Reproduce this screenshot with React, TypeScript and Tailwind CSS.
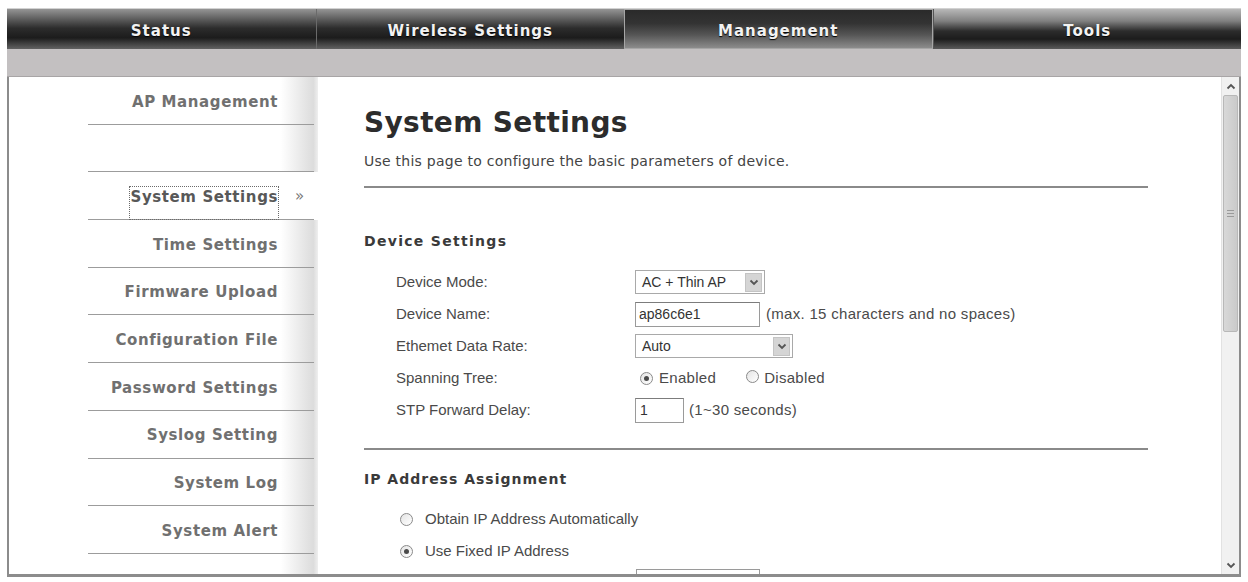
import React from "react";

const tabs = [
  { label: "Status", kind: "a" },
  { label: "Wireless Settings", kind: "a" },
  { label: "Management", kind: "m" },
  { label: "Tools", kind: "t" },
];

function Chevron({ up = false }: { up?: boolean }) {
  return (
    <svg width="10" height="7" viewBox="0 0 10 7">
      <path
        d={up ? "M1.5 5.5 L5 2 L8.5 5.5" : "M1.5 1.5 L5 5 L8.5 1.5"}
        stroke="#555"
        strokeWidth="1.8"
        fill="none"
      />
    </svg>
  );
}

function Radio({ checked = false }: { checked?: boolean }) {
  return (
    <span className="inline-flex w-[13px] h-[13px] rounded-full border border-[#8a8a8a] bg-[linear-gradient(135deg,#e4e4e4,#ffffff)] items-center justify-center shrink-0">
      {checked && <span className="w-[5px] h-[5px] rounded-full bg-[#4a4a4a]" />}
    </span>
  );
}

function Select({ width, value }: { width: string; value: string }) {
  return (
    <div
      className={`${width} h-[24px] border border-[#a9a9a9] bg-white flex items-center justify-between pl-[6px] pr-[2px] text-[14px] text-[#333]`}
    >
      <span>{value}</span>
      <span className="w-[17px] h-[19px] bg-[#d5d5d5] border border-[#c4c4c4] flex items-center justify-center">
        <Chevron />
      </span>
    </div>
  );
}

function Nav() {
  return (
    <div className="h-[41px] grid grid-cols-4 border-t border-[#d2d2d2] bg-[#1e1e1e]">
      {tabs.map((t) => (
        <div
          key={t.label}
          className={
            t.kind === "m"
              ? "flex items-center justify-center border border-[#a6a6a6] bg-[linear-gradient(180deg,#2a2a2a_0%,#333333_35%,#555555_65%,#8c8c8c_100%)]"
              : t.kind === "t"
              ? "flex items-center justify-center border-l border-[#555] bg-[linear-gradient(180deg,#b8b8b8_0%,#808080_30%,#2c2c2c_55%,#1c1c1c_75%,#5a5a5a_100%)]"
              : "flex items-center justify-center border-l border-[#6a6a6a] first:border-l-0 bg-[linear-gradient(180deg,#959595_0%,#5e5e5e_25%,#2c2c2c_48%,#1c1c1c_72%,#626262_100%)]"
          }
        >
          <span className="font-['DejaVu_Sans',sans-serif] font-bold text-[15px] tracking-[1px] text-[#f2f2f2] [text-shadow:0_1px_1px_#000] pt-[5px]">
            {t.label}
          </span>
        </div>
      ))}
    </div>
  );
}

const items = [
  "AP Management",
  "",
  "System Settings",
  "Time Settings",
  "Firmware Upload",
  "Configuration File",
  "Password Settings",
  "Syslog Setting",
  "System Log",
  "System Alert",
];

function Sidebar() {
  return (
    <div className="w-[309px] shrink-0 flex flex-col bg-[linear-gradient(90deg,#ffffff_0%,#ffffff_88%,#dcdcdc_98.5%,#efefef_100%)] font-['DejaVu_Sans',sans-serif] font-bold text-[15px] tracking-[0.6px]">
      {items.map((it) => {
        const active = it === "System Settings";
        return (
          <div key={it || "blank"} className={active ? "bg-white" : ""}>
            {active ? (
              <div className="h-[46.7px] flex justify-end items-start pt-[14px] pr-[40px]">
                <span className="relative h-[34px] border border-dotted border-[#6a6a6a] pt-[1px] leading-[18px] text-[#585858] -mr-[1px]">
                  {it}
                  <span className="absolute left-[calc(100%+17px)] top-[0px] text-[15px] tracking-[0px] text-[#777] font-normal">
                    »
                  </span>
                </span>
              </div>
            ) : (
              <div className="h-[46.7px] flex justify-end items-center pt-[3px] pr-[40px] text-[#707070]">
                {it}
              </div>
            )}
            <div className="ml-[79px] mr-[4px] h-[1px] bg-[#9c9c9c]" />
          </div>
        );
      })}
    </div>
  );
}

function Row({ label, children }: { label: string; children: React.ReactNode }) {
  return (
    <div className="h-[32px] flex items-center">
      <div className="w-[239px] shrink-0">{label}</div>
      <div className="flex items-center">{children}</div>
    </div>
  );
}

function Content() {
  return (
    <div className="flex-1 pl-[46px] pt-[30px] overflow-hidden">
      <h1 className="font-['DejaVu_Sans',sans-serif] font-bold text-[28px] leading-[32px] tracking-[0.35px] text-[#2c2c2c]">
        System Settings
      </h1>
      <p className="mt-[14px] font-['DejaVu_Sans',sans-serif] text-[14px] leading-[16px] tracking-[0.25px] text-[#444]">
        Use this page to configure the basic parameters of device.
      </p>
      <div className="mt-[17px] w-[784px] h-[2px] bg-[#8a8a8a]" />
      <h2 className="mt-[44px] font-['DejaVu_Sans',sans-serif] font-bold text-[14px] leading-[18px] tracking-[1.3px] text-[#3a3a3a]">
        Device Settings
      </h2>
      <div className="mt-[16px] pl-[32px] font-['Liberation_Sans',sans-serif] text-[15px] text-[#4a4a4a]">
        <Row label="Device Mode:">
          <Select width="w-[130px]" value="AC + Thin AP" />
        </Row>
        <Row label="Device Name:">
          <div className="w-[125px] h-[25px] border border-[#9a9a9a] border-t-[#7c7c7c] flex items-center pl-[3px] text-[14px] text-[#333]">
            ap86c6e1
          </div>
          <span className="ml-[6px] tracking-[0.3px]">(max. 15 characters and no spaces)</span>
        </Row>
        <Row label="Ethemet Data Rate:">
          <Select width="w-[158px]" value="Auto" />
        </Row>
        <Row label="Spanning Tree:">
          <div className="flex items-center ml-[5px] tracking-[0.3px]">
            <Radio checked />
            <span className="ml-[6px]">Enabled</span>
            <span className="ml-[30px]">
              <Radio />
            </span>
            <span className="ml-[5px]">Disabled</span>
          </div>
        </Row>
        <Row label="STP Forward Delay:">
          <div className="w-[49px] h-[25px] border border-[#9a9a9a] border-t-[#7c7c7c] flex items-center pl-[4px] text-[14px] text-[#333]">
            1
          </div>
          <span className="ml-[5px] tracking-[0.3px]">(1~30 seconds)</span>
        </Row>
      </div>
      <div className="mt-[22px] w-[784px] h-[2px] bg-[#8a8a8a]" />
      <h2 className="mt-[20px] font-['DejaVu_Sans',sans-serif] font-bold text-[14px] leading-[18px] tracking-[1px] text-[#3a3a3a]">
        IP Address Assignment
      </h2>
      <div className="mt-[15px] pl-[36px] font-['Liberation_Sans',sans-serif] text-[15px] text-[#4a4a4a]">
        <div className="h-[32px] flex items-center">
          <Radio />
          <span className="ml-[12px]">Obtain IP Address Automatically</span>
        </div>
        <div className="h-[32px] flex items-center">
          <Radio checked />
          <span className="ml-[12px]">Use Fixed IP Address</span>
        </div>
      </div>
      <div className="mt-[2px] ml-[272px] w-[124px] h-[24px] border border-[#9a9a9a]" />
    </div>
  );
}

function Scrollbar() {
  return (
    <div className="w-[18px] shrink-0 flex flex-col bg-[#f1f1f1] border-l border-[#e2e2e2]">
      <div className="h-[18px] flex items-center justify-center">
        <Chevron up />
      </div>
      <div className="h-[237px] mx-[1px] rounded-[2px] border border-[#b8b8b8] bg-[linear-gradient(90deg,#d8d8d8,#cacaca)] flex items-center justify-center">
        <div className="flex flex-col gap-[2px]">
          <div className="w-[7px] h-[1px] bg-[#9a9a9a]" />
          <div className="w-[7px] h-[1px] bg-[#9a9a9a]" />
          <div className="w-[7px] h-[1px] bg-[#9a9a9a]" />
        </div>
      </div>
      <div className="flex-1" />
      <div className="h-[18px] flex items-center justify-center">
        <Chevron />
      </div>
    </div>
  );
}

export default function App() {
  return (
    <div className="w-[1248px] h-[582px] bg-white overflow-hidden">
      <div className="pt-[8px] px-[7px]">
        <Nav />
        <div className="h-[28px] bg-[#c3c0c1] border-b border-[#a8a5a6]" />
        <div className="h-[500px] flex border-l-[2px] border-b-[3px] border-r-[2px] border-[#8c8c8c] overflow-hidden">
          <Sidebar />
          <Content />
          <Scrollbar />
        </div>
      </div>
    </div>
  );
}
